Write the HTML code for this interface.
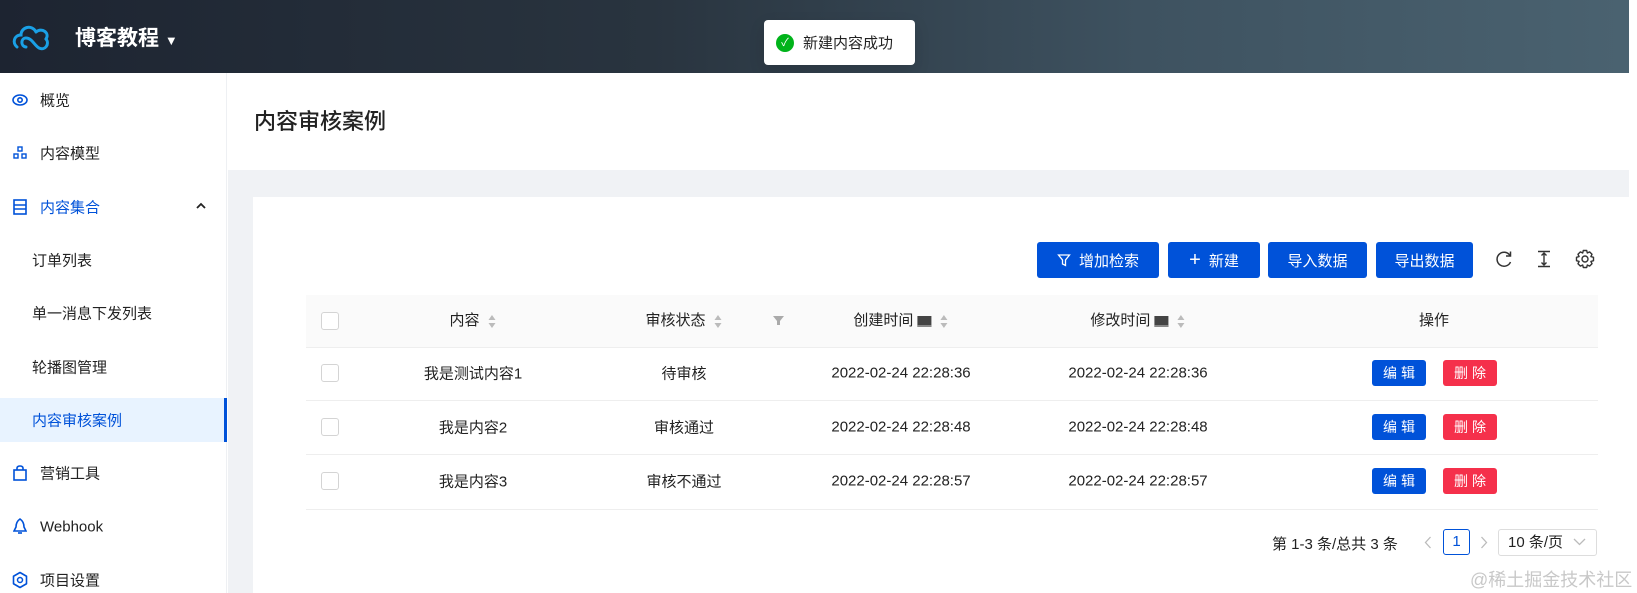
<!DOCTYPE html>
<html><head><meta charset="utf-8"><style>
*{margin:0;padding:0;box-sizing:border-box}
body{width:1637px;height:593px;overflow:hidden;background:#fff;font-family:"Liberation Sans","Noto Sans CJK SC",sans-serif;color:#222;font-size:15px;position:relative}
.a{position:absolute;white-space:nowrap}
.hdr{left:0;top:0;width:1629px;height:73px;background:linear-gradient(90deg,#1d2431 0%,#29343f 40%,#3e5260 70%,#4a6270 100%)}
.side{left:0;top:73px;width:227px;height:520px;background:#fff;border-right:1px solid #eef0f3}
.mi{left:40px;font-size:15px;color:#222;transform:translateY(-50%)}
.si{left:32px;font-size:15px;color:#222;transform:translateY(-50%)}
.btn{top:242px;height:36px;background:#0052d9;color:#fff;border-radius:3px;font-size:15px;display:flex;align-items:center;justify-content:center;gap:8px}
.th{top:295px;height:52px;line-height:52px;font-size:15px;color:#222;transform:translateX(-50%)}
.td{font-size:15px;color:#222;transform:translate(-50%,-50%)}
.cb{width:18px;height:18px;border:1px solid #d4d4d4;border-radius:3px;background:#fff}
.sm{width:26px;height:26px;border-radius:3px;color:#fff;font-size:14px;text-align:center;line-height:26px;letter-spacing:4px;padding-left:4px}
.sort{display:inline-block;width:9px;vertical-align:middle;margin-left:8px}
.line{left:306px;width:1292px;height:1px;background:#eee}
</style></head><body>
<div class="a hdr"></div>
<svg class="a" style="left:12px;top:22px" width="40" height="30" viewBox="0 0 40 30"><path d="M5 25 C0 21 2 13 9 13 C9 5 20 2 24 10 M24 10 C30 5 38 11 34 17 C38 22 33 29 27 26 C22 23 20 16 14 16 C9 16 8 24 14 25" fill="none" stroke="#1aa0e6" stroke-width="3" stroke-linecap="round"/></svg>
<div class="a" style="left:75px;top:22px;font-size:21px;color:#fff;font-weight:bold">博客教程 <span style="font-size:13px">▼</span></div>
<div class="a" style="left:764px;top:20px;width:151px;height:45px;background:#fff;border-radius:4px;box-shadow:0 6px 16px rgba(0,0,0,.12);display:flex;align-items:center;padding-left:12px;font-size:15px;color:#222"><span style="display:inline-block;width:18px;height:18px;border-radius:50%;background:#00b31a;color:#fff;font-size:11px;text-align:center;line-height:18px;margin-right:9px">✓</span>新建内容成功</div>
<div class="a side"></div>
<svg class="a" style="left:12px;top:93px" width="16" height="14" viewBox="0 0 16 14"><ellipse cx="8" cy="7" rx="7" ry="5" fill="none" stroke="#0052d9" stroke-width="1.6"/><circle cx="8" cy="7" r="2.2" fill="none" stroke="#0052d9" stroke-width="1.6"/></svg>
<div class="a mi" style="top:100px">概览</div>
<svg class="a" style="left:13px;top:146px" width="14" height="13" viewBox="0 0 14 13"><rect x="5" y="1" width="4" height="4" fill="none" stroke="#0052d9" stroke-width="1.4"/><rect x="1" y="8" width="4" height="4" fill="none" stroke="#0052d9" stroke-width="1.4"/><rect x="9" y="8" width="4" height="4" fill="none" stroke="#0052d9" stroke-width="1.4"/></svg>
<div class="a mi" style="top:153px">内容模型</div>
<svg class="a" style="left:13px;top:199px" width="14" height="16" viewBox="0 0 14 16"><rect x="1" y="1" width="12" height="14" fill="none" stroke="#0052d9" stroke-width="1.6"/><path d="M1 6H13M1 10H13" stroke="#0052d9" stroke-width="1.4"/></svg>
<div class="a mi" style="top:207px;color:#0052d9">内容集合</div>
<svg class="a" style="left:196px;top:202px" width="10" height="7" viewBox="0 0 10 7"><path d="M1 6L5 2L9 6" fill="none" stroke="#222" stroke-width="1.8"/></svg>
<div class="a si" style="top:260px">订单列表</div>
<div class="a si" style="top:313px">单一消息下发列表</div>
<div class="a si" style="top:367px">轮播图管理</div>
<div class="a" style="left:0;top:398px;width:227px;height:44px;background:#e8f3ff;border-right:3px solid #0052d9"></div>
<div class="a si" style="top:420px;color:#0052d9">内容审核案例</div>
<svg class="a" style="left:13px;top:465px" width="14" height="16" viewBox="0 0 14 16"><rect x="1" y="5" width="12" height="10" fill="none" stroke="#0052d9" stroke-width="1.6"/><path d="M4 5V3a3 2 0 0 1 6 0V5" fill="none" stroke="#0052d9" stroke-width="1.6"/></svg>
<div class="a mi" style="top:473px">营销工具</div>
<svg class="a" style="left:13px;top:518px" width="14" height="17" viewBox="0 0 14 17"><path d="M7 1C4 3 3 6 3 9L1 13H13L11 9C11 6 10 3 7 1Z" fill="none" stroke="#0052d9" stroke-width="1.6"/><path d="M5 15H9" stroke="#0052d9" stroke-width="1.6"/></svg>
<div class="a mi" style="top:527px">Webhook</div>
<svg class="a" style="left:11px;top:571px" width="18" height="18" viewBox="0 0 18 18"><path d="M9 1.5L15.5 5.25V12.75L9 16.5L2.5 12.75V5.25Z" fill="none" stroke="#0052d9" stroke-width="1.6" stroke-linejoin="round"/><circle cx="9" cy="9" r="2.5" fill="none" stroke="#0052d9" stroke-width="1.5"/></svg>
<div class="a mi" style="top:580px">项目设置</div>
<div class="a" style="left:228px;top:73px;width:1401px;height:97px;background:#fff"></div>
<div class="a" style="left:254px;top:104px;font-size:22px;color:#222;font-weight:500">内容审核案例</div>
<div class="a" style="left:228px;top:170px;width:1401px;height:423px;background:#f0f2f5"></div>
<div class="a" style="left:253px;top:197px;width:1376px;height:396px;background:#fff"></div>
<div class="a btn" style="left:1037px;width:122px"><svg width="14" height="14" viewBox="0 0 14 14"><path d="M1.5 2H12.5L8.5 7V12.5L5.5 11V7Z" fill="none" stroke="#fff" stroke-width="1.3"/></svg>增加检索</div>
<div class="a btn" style="left:1168px;width:92px"><span style="font-size:20px;font-weight:300">+</span>新建</div>
<div class="a btn" style="left:1268px;width:99px">导入数据</div>
<div class="a btn" style="left:1376px;width:97px">导出数据</div>
<svg class="a" style="left:1495px;top:250px" width="18" height="18" viewBox="0 0 18 18"><path d="M15 5.5A7 7 0 1 0 15.5 12" fill="none" stroke="#333" stroke-width="1.5"/><path d="M15.5 1.5V6H11" fill="none" stroke="#333" stroke-width="1.5"/></svg>
<svg class="a" style="left:1536px;top:250px" width="16" height="18" viewBox="0 0 16 18"><path d="M2 1.5H14M2 16.5H14M8 3V15M5.5 5.5L8 3L10.5 5.5M5.5 12.5L8 15L10.5 12.5" fill="none" stroke="#333" stroke-width="1.4"/></svg>
<svg class="a" style="left:1575px;top:249px" width="20" height="20" viewBox="0 0 20 20"><path d="M8.3 1.5H11.7L12.3 4L14.6 2.9L17 5.3L15.9 7.6L18.5 8.3V11.7L15.9 12.4L17 14.7L14.6 17.1L12.3 16L11.7 18.5H8.3L7.7 16L5.4 17.1L3 14.7L4.1 12.4L1.5 11.7V8.3L4.1 7.6L3 5.3L5.4 2.9L7.7 4Z" fill="none" stroke="#333" stroke-width="1.4" stroke-linejoin="round"/><circle cx="10" cy="10" r="3" fill="none" stroke="#333" stroke-width="1.4"/></svg>
<div class="a" style="left:306px;top:295px;width:1292px;height:52px;background:#fafafa"></div>
<div class="a cb" style="left:321px;top:312px"></div>
<div class="a th" style="left:473px">内容<svg class="sort" width="9" height="15" viewBox="0 0 9 15"><path d="M4.5 1L8 6H1Z M4.5 14L8 9H1Z" fill="#bbb"/></svg></div>
<div class="a th" style="left:684px">审核状态<svg class="sort" width="9" height="15" viewBox="0 0 9 15"><path d="M4.5 1L8 6H1Z M4.5 14L8 9H1Z" fill="#bbb"/></svg></div>
<svg class="a" style="left:773px;top:315px" width="11" height="11" viewBox="0 0 11 11"><path d="M0 1H11L7 6V10H4V6Z" fill="#aaa"/></svg>
<div class="a th" style="left:901px">创建时间 <span style="display:inline-block;width:14px;height:11px;background:#444;vertical-align:middle;border-bottom:2px solid #888"></span><svg class="sort" width="9" height="15" viewBox="0 0 9 15"><path d="M4.5 1L8 6H1Z M4.5 14L8 9H1Z" fill="#bbb"/></svg></div>
<div class="a th" style="left:1138px">修改时间 <span style="display:inline-block;width:14px;height:11px;background:#444;vertical-align:middle;border-bottom:2px solid #888"></span><svg class="sort" width="9" height="15" viewBox="0 0 9 15"><path d="M4.5 1L8 6H1Z M4.5 14L8 9H1Z" fill="#bbb"/></svg></div>
<div class="a th" style="left:1434px">操作</div>
<div class="a line" style="top:347px"></div>
<div class="a line" style="top:400px"></div>
<div class="a line" style="top:454px"></div>
<div class="a line" style="top:509px"></div>

<div class="a cb" style="left:321px;top:364px"></div>
<div class="a td" style="left:473px;top:373px">我是测试内容1</div>
<div class="a td" style="left:684px;top:373px">待审核</div>
<div class="a td" style="left:901px;top:373px">2022-02-24 22:28:36</div>
<div class="a td" style="left:1138px;top:373px">2022-02-24 22:28:36</div>
<div class="a sm" style="left:1372px;top:360px;width:54px;background:#0052d9">编辑</div>
<div class="a sm" style="left:1443px;top:360px;width:54px;background:#f5304b">删除</div>

<div class="a cb" style="left:321px;top:418px"></div>
<div class="a td" style="left:473px;top:427px">我是内容2</div>
<div class="a td" style="left:684px;top:427px">审核通过</div>
<div class="a td" style="left:901px;top:427px">2022-02-24 22:28:48</div>
<div class="a td" style="left:1138px;top:427px">2022-02-24 22:28:48</div>
<div class="a sm" style="left:1372px;top:414px;width:54px;background:#0052d9">编辑</div>
<div class="a sm" style="left:1443px;top:414px;width:54px;background:#f5304b">删除</div>

<div class="a cb" style="left:321px;top:472px"></div>
<div class="a td" style="left:473px;top:481px">我是内容3</div>
<div class="a td" style="left:684px;top:481px">审核不通过</div>
<div class="a td" style="left:901px;top:481px">2022-02-24 22:28:57</div>
<div class="a td" style="left:1138px;top:481px">2022-02-24 22:28:57</div>
<div class="a sm" style="left:1372px;top:468px;width:54px;background:#0052d9">编辑</div>
<div class="a sm" style="left:1443px;top:468px;width:54px;background:#f5304b">删除</div>

<div class="a" style="left:1272px;top:533px;font-size:15px;color:#222">第 1-3 条/总共 3 条</div>
<svg class="a" style="left:1424px;top:536px" width="8" height="13" viewBox="0 0 8 13"><path d="M6.5 1L1.5 6.5L6.5 12" fill="none" stroke="#bbb" stroke-width="1.3"/></svg>
<div class="a" style="left:1443px;top:529px;width:27px;height:26px;border:1px solid #0052d9;border-radius:3px;color:#0052d9;text-align:center;line-height:24px;font-size:15px">1</div>
<svg class="a" style="left:1480px;top:536px" width="8" height="13" viewBox="0 0 8 13"><path d="M1.5 1L6.5 6.5L1.5 12" fill="none" stroke="#bbb" stroke-width="1.3"/></svg>
<div class="a" style="left:1498px;top:529px;width:99px;height:27px;border:1px solid #ddd;border-radius:3px;font-size:15px;line-height:25px;padding-left:9px;color:#222">10 条/页</div>
<svg class="a" style="left:1573px;top:538px" width="13" height="8" viewBox="0 0 13 8"><path d="M1 1L6.5 6.5L12 1" fill="none" stroke="#bbb" stroke-width="1.3"/></svg>
<div class="a" style="left:1470px;top:566px;font-size:18px;color:#c8c8c8">@稀土掘金技术社区</div>
</body></html>
